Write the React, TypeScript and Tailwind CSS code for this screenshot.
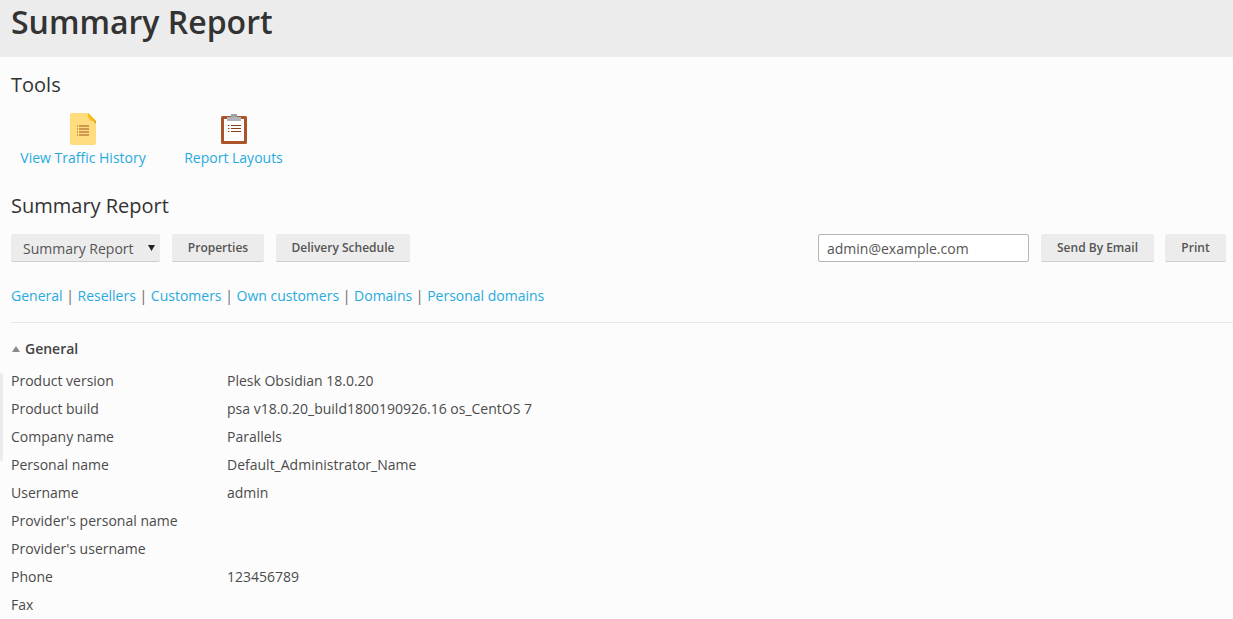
const links = ["General", "Resellers", "Customers", "Own customers", "Domains", "Personal domains"];

const rows = [
  ["Product version", "Plesk Obsidian 18.0.20"],
  ["Product build", "psa v18.0.20_build1800190926.16 os_CentOS 7"],
  ["Company name", "Parallels"],
  ["Personal name", "Default_Administrator_Name"],
  ["Username", "admin"],
  ["Provider's personal name", ""],
  ["Provider's username", ""],
  ["Phone", "123456789"],
  ["Fax", ""],
];

function NoteIcon() {
  return (
    <svg width="26" height="32" viewBox="0 0 26 32">
      <path d="M2 0H18L26 8V30a2 2 0 0 1-2 2H2a2 2 0 0 1-2-2V2a2 2 0 0 1 2-2Z" fill="#ffdd7f" />
      <path d="M18 0L26 8V11L19 4Z" fill="#d9a940" />
      <path d="M18 0L26 8H21L18 4Z" fill="#fcbd17" />
      <g fill="#cf9a50">
        <rect x="7" y="12" width="1" height="2" />
        <rect x="7" y="15" width="1" height="2" />
        <rect x="7" y="18" width="1" height="2" />
        <rect x="7" y="21" width="1" height="2" />
        <rect x="9" y="12" width="10" height="2" />
        <rect x="9" y="15" width="10" height="2" />
        <rect x="9" y="18" width="10" height="2" />
        <rect x="9" y="21" width="10" height="2" />
      </g>
    </svg>
  );
}

function ClipboardIcon() {
  return (
    <svg width="26" height="30" viewBox="0 0 26 30">
      <rect x="0" y="2" width="26" height="28" rx="1.5" fill="#a9542a" />
      <rect x="3" y="5" width="20" height="22" fill="#fff" />
      <rect x="6" y="3" width="14" height="4" fill="#b1b5b8" />
      <rect x="10" y="0" width="6" height="3" fill="#9aa0a4" />
      <g fill="#8a3f17">
        <rect x="7" y="11" width="1.5" height="1" />
        <rect x="7" y="14" width="1.5" height="1" />
        <rect x="7" y="17" width="1.5" height="1" />
        <rect x="10" y="11" width="10" height="1" />
        <rect x="10" y="14" width="10" height="1" />
        <rect x="10" y="17" width="10" height="1" />
      </g>
    </svg>
  );
}

function Btn({ children, className = "" }: { children: React.ReactNode; className?: string }) {
  return (
    <button className={`flex h-7 items-center justify-center rounded-[2px] border-b border-[#cfcfcf] bg-[#ececec] text-[12px] font-semibold text-[#555] ${className}`}>
      {children}
    </button>
  );
}

export default function App() {
  return (
    <div className="relative h-[619px] overflow-hidden bg-[#fcfcfc] font-['Open_Sans',sans-serif] text-[14px] text-[#4b4b4b]">
      <header className="h-[57px] bg-[#ececec] pl-[11px]">
        <h1 className="text-[32px] leading-[44px] font-semibold text-[#333]">Summary Report</h1>
      </header>

      <div className="pl-[11px]">
        <h2 className="mt-4 text-[20px] leading-6 text-[#333]">Tools</h2>
        <div className="mt-[16px] flex">
          <a className="ml-[9px] flex w-[126px] flex-col items-center text-[#28aade]">
            <NoteIcon />
            <span className="mt-[3px] leading-[20px] whitespace-nowrap">View Traffic History</span>
          </a>
          <a className="ml-[38px] flex w-[99px] flex-col items-center text-[#28aade]">
            <span className="pt-[1px]"><ClipboardIcon /></span>
            <span className="mt-[4px] leading-[20px] whitespace-nowrap">Report Layouts</span>
          </a>
        </div>

        <h2 className="mt-[26px] text-[20px] leading-6 text-[#333]">Summary Report</h2>

        <div className="mt-[16px] flex items-center pr-[7px]">
          <div className="relative flex h-7 w-[149px] items-center rounded-[2px] border-b border-[#cfcfcf] bg-[#ececec] pt-[1px] pl-3 text-[#555]">
            <span>Summary Report</span>
            <svg className="absolute top-[11px] right-[5px]" width="7" height="6" viewBox="0 0 7 6">
              <path d="M0 0H7L3.5 6Z" fill="#222" />
            </svg>
          </div>
          <Btn className="ml-3 w-[92px]">Properties</Btn>
          <Btn className="ml-3 w-[134px]">Delivery Schedule</Btn>
          <div className="ml-auto flex h-7 w-[211px] items-center rounded-[2px] border border-[#b5b5b5] bg-white pt-[1px] pl-2 text-[#555]">
            admin@example.com
          </div>
          <Btn className="ml-3 w-[113px]">Send By Email</Btn>
          <Btn className="ml-[11px] w-[61px]">Print</Btn>
        </div>

        <nav className="mt-[24px] flex h-5 items-center leading-5">
          {links.map((l, i) => (
            <span key={l} className="flex whitespace-pre">
              {i > 0 && <span className="text-[#666]"> | </span>}
              <a className="text-[#28aade]">{l}</a>
            </span>
          ))}
        </nav>

        <div className="mt-4 border-t border-[#e8e8e8]" />

        <div className="mt-[15px] flex h-5 items-center">
          <svg className="ml-[1px] mt-[1px]" width="8" height="6" viewBox="0 0 8 6">
            <path d="M4 0L8 6H0Z" fill="#8a8a8a" />
          </svg>
          <span className="ml-[5px] font-semibold text-[#444]">General</span>
        </div>

        <div className="mt-[8px]">
          {rows.map(([k, v]) => (
            <div key={k} className="flex h-7 items-center">
              <div className="w-[216px] shrink-0">{k}</div>
              <div>{v}</div>
            </div>
          ))}
        </div>
      </div>

      <div className="absolute top-[373px] left-0 h-[88px] w-[3px] rounded-r-[2px] bg-[#ececec]" />
    </div>
  );
}
